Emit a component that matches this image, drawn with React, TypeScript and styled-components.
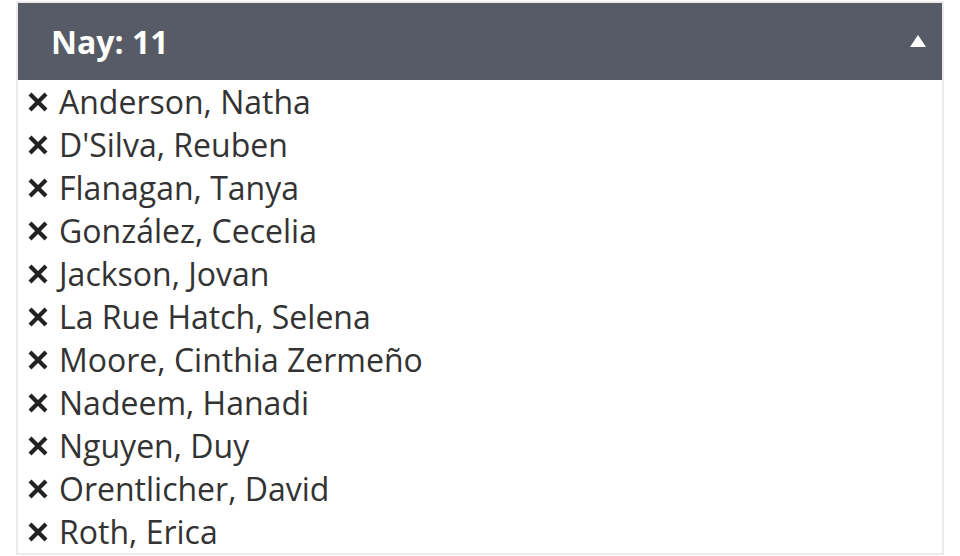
import styled, { createGlobalStyle } from 'styled-components'

const GlobalStyle = createGlobalStyle`
  body {
    margin: 0;
    background: #fff;
    font-family: 'Open Sans', 'Noto Sans', sans-serif;
  }
`

const Page = styled.div`
  padding: 1px 0 0 16px;
`

const Panel = styled.div`
  width: 924px;
  border: 2px solid #ececec;
  background: #fff;
`

const Header = styled.div`
  display: flex;
  align-items: center;
  justify-content: space-between;
  height: 77px;
  padding: 0 16px 0 33px;
  background-color: #565b65;
  color: #fff;
  font-size: 32px;
  font-weight: 700;
`

const Caret = styled.span`
  width: 0;
  height: 0;
  border-left: 8px solid transparent;
  border-right: 8px solid transparent;
  border-bottom: 12px solid #fff;
  margin-top: -2px;
`

const List = styled.ul`
  list-style: none;
  margin: 0;
  padding: 0 0 0 9px;
`

const Item = styled.li`
  display: flex;
  align-items: center;
  gap: 10px;
  height: 43px;
  font-size: 32px;
  color: #333;
`

const CrossIcon = styled.svg`
  flex-shrink: 0;
  width: 22px;
  height: 22px;
`

const Cross = () => (
  <CrossIcon viewBox="0 0 22 22">
    <path d="M3 3 L19 19 M19 3 L3 19" stroke="#222" strokeWidth="4.2" strokeLinecap="butt" />
  </CrossIcon>
)

const names = [
  'Anderson, Natha',
  "D'Silva, Reuben",
  'Flanagan, Tanya',
  'González, Cecelia',
  'Jackson, Jovan',
  'La Rue Hatch, Selena',
  'Moore, Cinthia Zermeño',
  'Nadeem, Hanadi',
  'Nguyen, Duy',
  'Orentlicher, David',
  'Roth, Erica',
]

export default function App() {
  return (
    <Page>
      <GlobalStyle />
      <Panel>
        <Header>
          <span>Nay: {names.length}</span>
          <Caret />
        </Header>
        <List>
          {names.map(name => (
            <Item key={name}>
              <Cross />
              {name}
            </Item>
          ))}
        </List>
      </Panel>
    </Page>
  )
}
